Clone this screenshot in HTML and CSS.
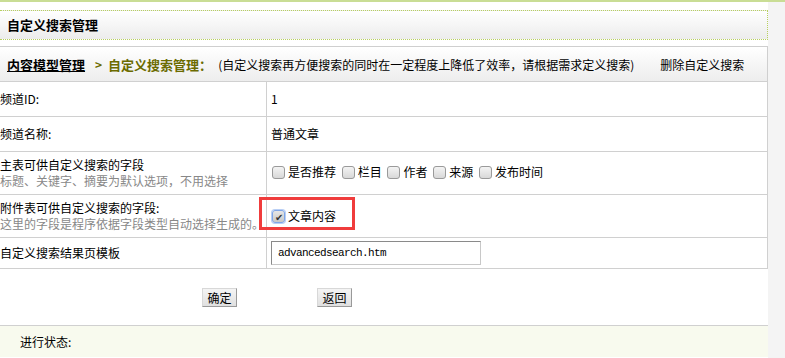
FILE: index.html
```html
<!DOCTYPE html>
<html>
<head>
    <meta charset="UTF-8">
    <title>自定义搜索管理</title>
    <link rel="stylesheet" href="styles.css">
</head>
<body>
    <div id="page">
        <div class="title-bar">自定义搜索管理</div>
        <div class="crumb-bar">
            <a class="crumb-link" href="#">内容模型管理</a>
            <span class="crumb-arrow">&gt;</span>
            <span class="crumb-current">自定义搜索管理：</span>
            <span class="crumb-note">(自定义搜索再方便搜索的同时在一定程度上降低了效率，请根据需求定义搜索)</span>
            <a class="crumb-action" href="#">删除自定义搜索</a>
        </div>
        <table class="form-table">
            <tr class="row-short">
                <td class="label-cell">频道ID:</td>
                <td class="value-cell">1</td>
            </tr>
            <tr class="row-short">
                <td class="label-cell">频道名称:</td>
                <td class="value-cell">普通文章</td>
            </tr>
            <tr class="row-tall">
                <td class="label-cell">
                    主表可供自定义搜索的字段<br>
                    <span class="hint">标题、关键字、摘要为默认选项，不用选择</span>
                </td>
                <td class="value-cell">
                    <label class="check"><span class="box"></span>是否推荐</label>
                    <label class="check"><span class="box"></span>栏目</label>
                    <label class="check"><span class="box"></span>作者</label>
                    <label class="check"><span class="box"></span>来源</label>
                    <label class="check"><span class="box"></span>发布时间</label>
                </td>
            </tr>
            <tr class="row-tall">
                <td class="label-cell">
                    附件表可供自定义搜索的字段:<br>
                    <span class="hint">这里的字段是程序依据字段类型自动选择生成的。</span>
                </td>
                <td class="value-cell marked">
                    <label class="check"><span class="box checked">&#10004;</span>文章内容</label>
                    <span class="red-mark"></span>
                </td>
            </tr>
            <tr class="row-input">
                <td class="label-cell">自定义搜索结果页模板</td>
                <td class="value-cell"><input class="tpl-input" type="text" value="advancedsearch.htm"></td>
            </tr>
        </table>
        <div class="button-row">
            <button class="btn">确定</button>
            <button class="btn">返回</button>
        </div>
        <div class="status-bar">进行状态:</div>
    </div>
</body>
</html>
```

FILE: styles.css
```css
html, body {
    margin: 0;
    padding: 0;
}

body {
    background-color: #f4f4f4;
    border-top: 2px solid #c9dd95;
    font-family: "Noto Sans CJK SC", "Liberation Sans", sans-serif;
    font-size: 12px;
    color: #000;
    height: 356px;
    overflow: hidden;
}

#page {
    width: 768px;
    background-color: #fff;
    padding-top: 8px;
    height: 348px;
}

.title-bar {
    height: 28px;
    line-height: 28px;
    border-top: 1px dotted #b8d060;
    border-bottom: 1px dotted #b8d060;
    border-right: 1px dotted #b8d060;
    background: linear-gradient(#fff, #ececec);
    font-size: 13px;
    font-weight: bold;
    padding-left: 7px;
}

.crumb-bar {
    margin-top: 6px;
    height: 34px;
    display: flex;
    align-items: center;
    border-top: 1px solid #cfcfcf;
    border-right: 1px solid #cfcfcf;
    background: linear-gradient(#fff, #ededed);
    padding-left: 7px;
    box-sizing: border-box;
    height: 35px;
}

.crumb-link {
    color: #000;
    font-weight: bold;
    font-size: 13px;
}

.crumb-arrow {
    color: #6b6b00;
    font-weight: bold;
    margin: 0 6px 0 10px;
}

.crumb-current {
    color: #6b6b00;
    font-weight: bold;
    font-size: 13px;
}

.crumb-note {
    margin-left: 6px;
}

.crumb-action {
    color: #000;
    text-decoration: none;
    margin-left: 26px;
}

.form-table {
    width: 768px;
    border-collapse: collapse;
}

.form-table td {
    border-top: 1px solid #d0d0d0;
    border-bottom: 1px solid #d0d0d0;
    border-right: 1px solid #d0d0d0;
    padding: 0;
    vertical-align: middle;
    line-height: 16px;
}

.label-cell {
    width: 266px;
    padding-left: 0;
}

.form-table .value-cell {
    padding-left: 4px;
}

.row-short td {
    height: 34px;
}

.row-tall td {
    height: 42px;
}

.row-input td {
    height: 30px;
}

.hint {
    color: #888;
}

.check {
    display: inline-flex;
    align-items: center;
    margin-right: 2px;
}

.box {
    display: inline-block;
    width: 11px;
    height: 11px;
    border: 1px solid #9a9a9a;
    border-radius: 3px;
    background: linear-gradient(#f4f4f4, #d8d8d8);
    margin: 0 3px 0 1px;
    font-size: 10px;
    line-height: 11px;
    text-align: center;
    color: #333;
}

.box.checked {
    border-color: #7fa6e8;
    box-shadow: 0 0 0 1px #b9cff5;
    background: linear-gradient(#e6e6e6, #c8c8c8);
}

.marked {
    position: relative;
}

.red-mark {
    position: absolute;
    left: -8px;
    top: 2px;
    width: 90px;
    height: 27px;
    border: 3px solid #f03c3c;
}

.tpl-input {
    width: 210px;
    height: 24px;
    box-sizing: border-box;
    border: 1px solid #c8c8c8;
    border-top-color: #8a8a8a;
    border-left-color: #8a8a8a;
    padding: 0 6px;
    font-family: "Liberation Mono", monospace;
    font-size: 11px;
    letter-spacing: -0.6px;
}

.button-row {
    height: 57px;
    display: flex;
    gap: 80px;
    padding-left: 202px;
    padding-top: 19px;
    box-sizing: border-box;
    border-bottom: 1px solid #d0d0d0;
}

.btn {
    width: 35px;
    height: 19px;
    padding: 0;
    font-family: inherit;
    font-size: 12px;
    line-height: 16px;
    background: linear-gradient(#f4f4f4, #e0e0e0);
    border: 1px solid #d8d8d8;
    border-right-color: #999;
    border-bottom-color: #999;
}

.status-bar {
    background-color: #f8faee;
    height: 31px;
    line-height: 31px;
    padding-left: 20px;
}
```
